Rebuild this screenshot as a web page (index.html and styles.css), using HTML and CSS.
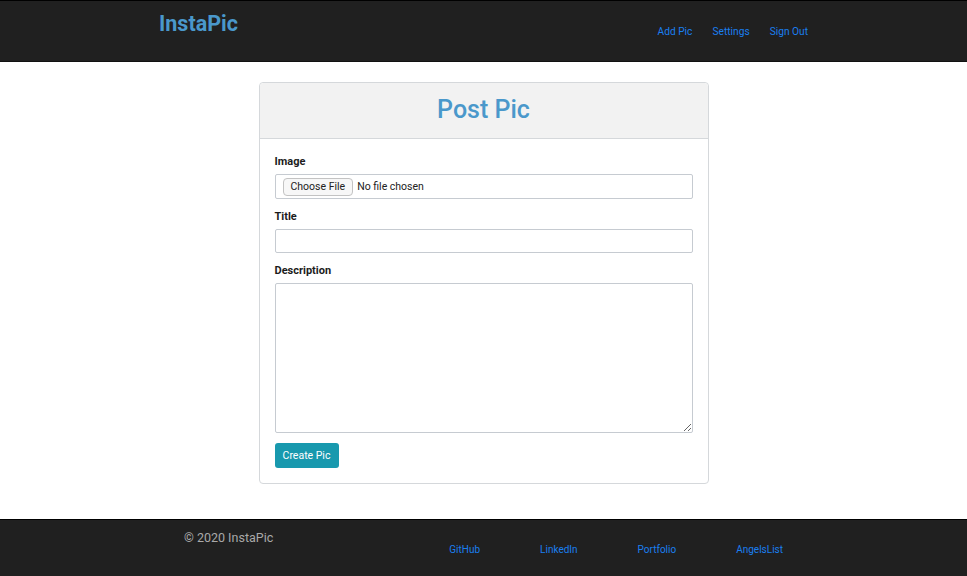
FILE: index.html
```html
<!DOCTYPE html>
<html lang="en">
<head>
<meta charset="utf-8">
<title>InstaPic</title>
<link rel="stylesheet" href="styles.css">
</head>
<body>
<header class="topbar">
  <div class="topbar-inner">
    <a class="brand" href="#">InstaPic</a>
    <nav class="nav">
      <a href="#">Add Pic</a>
      <a href="#">Settings</a>
      <a href="#">Sign Out</a>
    </nav>
  </div>
</header>
<main class="main">
  <section class="card">
    <div class="card-header"><h1>Post Pic</h1></div>
    <form class="card-body">
      <div class="group">
        <label>Image</label>
        <div class="file-input"><span class="file-btn">Choose File</span><span class="file-text">No file chosen</span></div>
      </div>
      <div class="group">
        <label>Title</label>
        <input class="text-input" type="text">
      </div>
      <div class="group">
        <label>Description</label>
        <textarea class="textarea"></textarea>
      </div>
      <button type="button" class="btn">Create Pic</button>
    </form>
  </section>
</main>
<footer class="footer">
  <div class="footer-inner">
    <span class="copy">© 2020 InstaPic</span>
    <nav class="footer-links">
      <a href="#">GitHub</a>
      <a href="#">LinkedIn</a>
      <a href="#">Portfolio</a>
      <a href="#">AngelsList</a>
    </nav>
  </div>
</footer>
</body>
</html>
```
FILE: styles.css
```css
* { box-sizing: border-box; }
html, body { margin: 0; padding: 0; }
body {
  font-family: Roboto, "Liberation Sans", Arial, sans-serif;
  background: #fff;
  color: #212529;
}
a { text-decoration: none; }

.topbar {
  background: #202020;
  border-top: 1px solid #000;
  border-bottom: 1px solid #111;
  height: 62px;
}
.topbar-inner {
  width: 649px;
  margin: 0 auto;
  display: flex;
  justify-content: space-between;
  align-items: flex-start;
}
.brand {
  color: #4a98cb;
  font-weight: 700;
  font-size: 21.5px;
  line-height: 24px;
  margin-top: 11px;
}
.nav {
  display: flex;
  gap: 20px;
  margin-top: 24px;
}
.nav a {
  color: #1a7ff0;
  font-size: 10.2px;
  line-height: 14px;
}

.main {
  padding: 20px 0 35px;
}
.card {
  width: 450px;
  margin: 0 auto;
  border: 1px solid #d5d8db;
  border-radius: 4px;
  background: #fff;
}
.card-header {
  background: #f2f2f2;
  border-bottom: 1px solid #d5d8db;
  height: 56px;
  display: flex;
  align-items: center;
  justify-content: center;
  border-radius: 4px 4px 0 0;
}
.card-header h1 {
  margin: 0 0 2px;
  color: #4a98cb;
  font-size: 25px;
  font-weight: 500;
  line-height: 30px;
}
.card-body {
  padding: 15px 15px 15px;
  display: flex;
  flex-direction: column;
  align-items: flex-start;
}
.group {
  width: 100%;
  display: flex;
  flex-direction: column;
  margin-bottom: 10px;
}
.group label {
  font-size: 11px;
  font-weight: 700;
  line-height: 15px;
  margin-bottom: 5px;
  color: #1c1c1c;
}
.file-input {
  height: 25px;
  border: 1px solid #c6cbd1;
  border-radius: 2px;
  display: flex;
  align-items: center;
  padding-left: 7px;
  font-size: 10.5px;
}
.file-btn {
  border: 1px solid #c3c3c3;
  border-radius: 4px;
  background: #f7f7f7;
  padding: 0 7px;
  height: 18px;
  line-height: 16px;
  margin-right: 4px;
  color: #222;
}
.file-text { color: #222; }
.text-input {
  height: 24px;
  border: 1px solid #c6cbd1;
  border-radius: 2px;
  width: 100%;
  margin: 0;
}
.textarea {
  height: 150px;
  border: 1px solid #c6cbd1;
  border-radius: 2px;
  width: 100%;
  margin: 0;
  resize: vertical;
}
.btn {
  background: #1899ae;
  color: #fff;
  border: none;
  border-radius: 3px;
  font-family: inherit;
  font-size: 10.5px;
  height: 25px;
  padding: 0 8px;
  width: 64px;
}

.footer {
  background: #202020;
  border-top: 1px solid #000;
  height: 58px;
}
.footer-inner {
  width: 599px;
  margin: 0 auto;
  display: flex;
  justify-content: space-between;
  align-items: flex-start;
}
.copy {
  color: #a9a9a9;
  font-size: 12.5px;
  line-height: 16px;
  margin-top: 10px;
}
.footer-links {
  display: flex;
  gap: 60px;
  margin-top: 23px;
}
.footer-links a {
  color: #1a7ff0;
  font-size: 10px;
  line-height: 14px;
}
```
